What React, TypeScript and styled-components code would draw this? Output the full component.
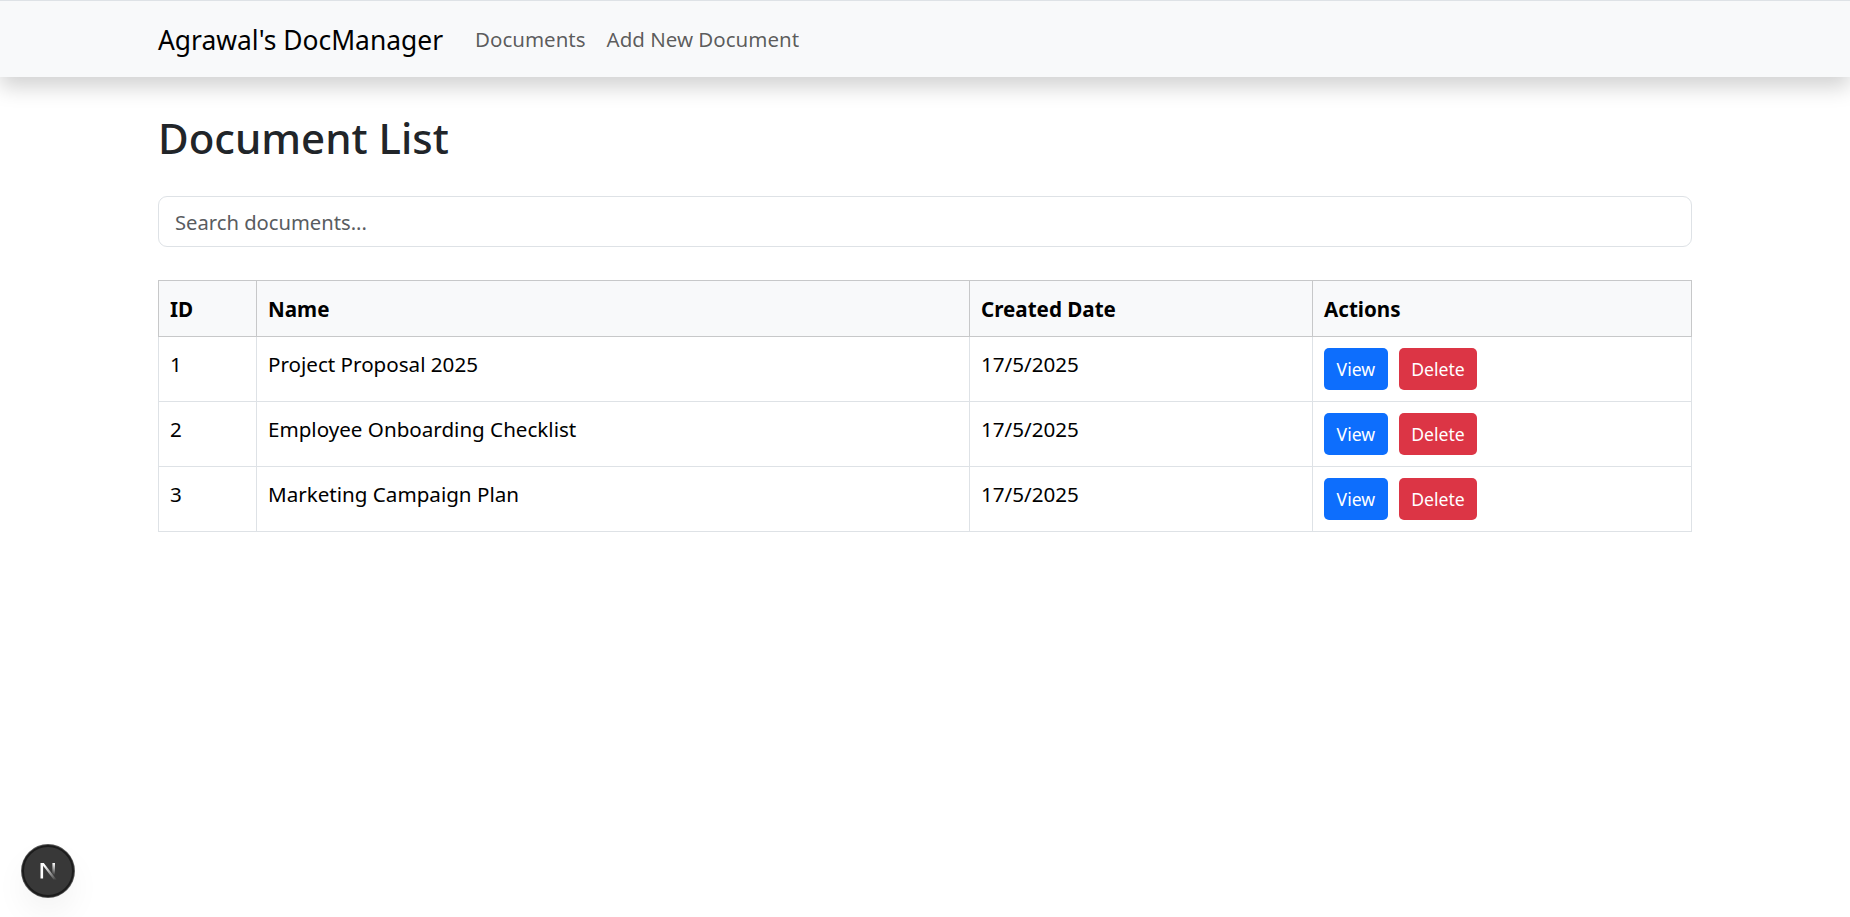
import React from "react";
import styled, { createGlobalStyle } from "styled-components";

const Global = createGlobalStyle`
  html, body { margin: 0; padding: 0; background: #fff; }
  body {
    font-family: "Noto Sans", "Open Sans", sans-serif;
    font-size: 20.6px;
    line-height: 1.5;
    color: #212529;
    min-height: 917px;
  }
`;

const Navbar = styled.nav`
  display: flex;
  align-items: center;
  height: 76px;
  background: #f8f9fa;
  border-top: 1px solid #dee2e6;
  box-shadow: 0 10px 20px rgba(0, 0, 0, 0.18);
  padding: 0 158px;
`;

const Brand = styled.a`
  font-size: 26.4px;
  color: #000;
  margin-top: 3px;
  margin-right: 32px;
  white-space: nowrap;
`;

const NavLink = styled.a`
  font-size: 20.5px;
  color: rgba(0, 0, 0, 0.65);
  margin-right: 21px;
  white-space: nowrap;
`;

const Main = styled.main`
  width: 1534px;
  margin: 0 auto;
`;

const Title = styled.h1`
  margin: 0;
  padding-top: 34px;
  font-size: 42px;
  font-weight: 500;
  line-height: 54px;
  color: #212529;
`;

const Search = styled.input`
  display: block;
  box-sizing: border-box;
  width: 100%;
  height: 51px;
  margin-top: 31px;
  padding: 0 16px;
  font: inherit;
  font-size: 20.2px;
  color: #212529;
  background: #fff;
  border: 1px solid #dee2e6;
  border-radius: 9px;
  outline: none;
  &::placeholder { color: #595c5f; opacity: 1; }
`;

const Table = styled.table`
  width: 1534px;
  margin-top: 33px;
  border-collapse: collapse;
  table-layout: fixed;
  color: #000;
`;

const Head = styled.th<{ $w?: number }>`
  width: ${(p) => (p.$w ? `${p.$w}px` : "auto")};
  height: 56px;
  box-sizing: border-box;
  padding: 2px 11px 0;
  background: #f8f9fa;
  border: 1px solid #c7c8c9;
  text-align: left;
  font-weight: 700;
`;

const Row = styled.tr`
  height: 65px;
`;

const Cell = styled.td`
  padding: 12px 11px 0;
  vertical-align: top;
  border: 1px solid #dee2e6;
`;

const ActionCell = styled(Cell)`
  padding-top: 11px;
`;

const Actions = styled.div`
  display: flex;
  gap: 11px;
`;

const Btn = styled.button<{ $variant: "primary" | "danger" }>`
  height: 42px;
  padding: 0 12.6px;
  font-family: inherit;
  font-size: 17.6px;
  color: #fff;
  border: none;
  border-radius: 5px;
  background: ${(p) => (p.$variant === "primary" ? "#0d6efd" : "#dc3545")};
`;

const DevBadge = styled.div`
  position: fixed;
  left: 22px;
  top: 845px;
  width: 52px;
  height: 52px;
  box-sizing: border-box;
  border-radius: 50%;
  background: #383838;
  border: 2px solid #1c1c1c;
  box-shadow: 0 0 0 1px #555, 0 16px 32px rgba(0, 0, 0, 0.05);
  display: flex;
  align-items: center;
  justify-content: center;
`;

const docs = [
  { id: 1, name: "Project Proposal 2025", date: "17/5/2025" },
  { id: 2, name: "Employee Onboarding Checklist", date: "17/5/2025" },
  { id: 3, name: "Marketing Campaign Plan", date: "17/5/2025" },
];

export default function App() {
  return (
    <>
      <Global />
      <Navbar>
        <Brand>Agrawal's DocManager</Brand>
        <NavLink>Documents</NavLink>
        <NavLink>Add New Document</NavLink>
      </Navbar>
      <Main>
        <Title>Document List</Title>
        <Search placeholder="Search documents..." />
        <Table>
          <thead>
            <tr>
              <Head $w={98}>ID</Head>
              <Head $w={713}>Name</Head>
              <Head $w={343}>Created Date</Head>
              <Head>Actions</Head>
            </tr>
          </thead>
          <tbody>
            {docs.map((d) => (
              <Row key={d.id}>
                <Cell>{d.id}</Cell>
                <Cell>{d.name}</Cell>
                <Cell>{d.date}</Cell>
                <ActionCell>
                  <Actions>
                    <Btn $variant="primary">View</Btn>
                    <Btn $variant="danger">Delete</Btn>
                  </Actions>
                </ActionCell>
              </Row>
            ))}
          </tbody>
        </Table>
      </Main>
      <DevBadge>
        <svg width="20" height="20" viewBox="0 0 20 20" fill="none">
          <defs>
            <linearGradient id="nfade" x1="6" y1="5" x2="17" y2="18" gradientUnits="userSpaceOnUse">
              <stop offset="0" stopColor="#fff" />
              <stop offset="1" stopColor="#fff" stopOpacity="0.1" />
            </linearGradient>
            <linearGradient id="nbar" x1="15" y1="2" x2="15" y2="14" gradientUnits="userSpaceOnUse">
              <stop offset="0" stopColor="#fff" />
              <stop offset="1" stopColor="#fff" stopOpacity="0" />
            </linearGradient>
          </defs>
          <path d="M2.5 2h2.6v15.5H2.5z" fill="#fff" />
          <path d="M3 2h2.8L18.5 18.5h-3z" fill="url(#nfade)" />
          <path d="M14.4 2H17v12h-2.6z" fill="url(#nbar)" />
        </svg>
      </DevBadge>
    </>
  );
}
